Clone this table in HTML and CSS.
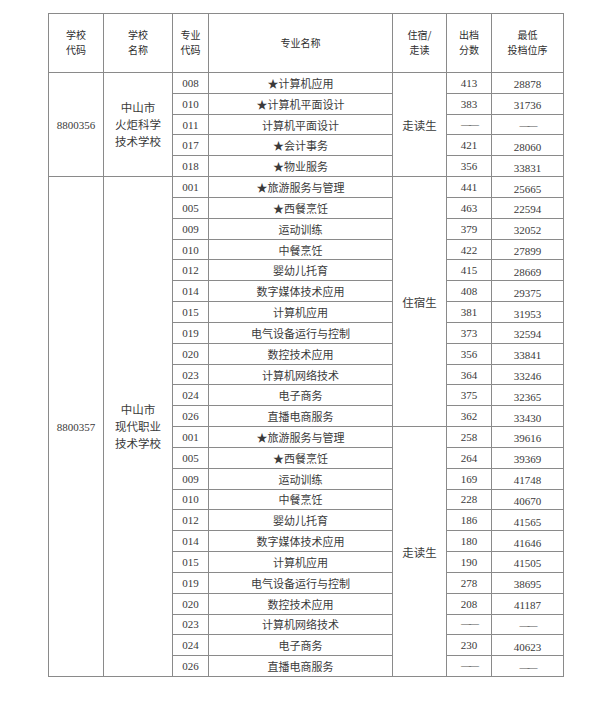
FILE: index.html
```html
<!DOCTYPE html>
<html lang="zh-CN">
<head>
<meta charset="utf-8">
<title>录取分数</title>
<link rel="stylesheet" href="styles.css">
</head>
<body>
<table class="score-table">
<colgroup>
<col class="c-code"><col class="c-name"><col class="c-mcode"><col class="c-major"><col class="c-stay"><col class="c-score"><col class="c-rank">
</colgroup>
<thead>
<tr class="head-row">
<th>学校<br>代码</th><th>学校<br>名称</th><th>专业<br>代码</th><th>专业名称</th><th>住宿/<br>走读</th><th>出档<br>分数</th><th>最低<br>投档位序</th>
</tr>
</thead>
<tbody>
<tr><td rowspan="5" class="num">8800356</td><td rowspan="5" class="school">中山市<br>火炬科学<br>技术学校</td><td class="num">008</td><td>★计算机应用</td><td rowspan="5" class="stay">走读生</td><td class="num">413</td><td class="num rank">28878</td></tr>
<tr><td class="num">010</td><td>★计算机平面设计</td><td class="num">383</td><td class="num rank">31736</td></tr>
<tr><td class="num">011</td><td>计算机平面设计</td><td class="num dash">——</td><td class="num rank dash">——</td></tr>
<tr><td class="num">017</td><td>★会计事务</td><td class="num">421</td><td class="num rank">28060</td></tr>
<tr><td class="num">018</td><td>★物业服务</td><td class="num">356</td><td class="num rank">33831</td></tr>

<tr><td rowspan="24" class="num">8800357</td><td rowspan="24" class="school">中山市<br>现代职业<br>技术学校</td><td class="num">001</td><td>★旅游服务与管理</td><td rowspan="12" class="stay">住宿生</td><td class="num">441</td><td class="num rank">25665</td></tr>
<tr><td class="num">005</td><td>★西餐烹饪</td><td class="num">463</td><td class="num rank">22594</td></tr>
<tr><td class="num">009</td><td>运动训练</td><td class="num">379</td><td class="num rank">32052</td></tr>
<tr><td class="num">010</td><td>中餐烹饪</td><td class="num">422</td><td class="num rank">27899</td></tr>
<tr><td class="num">012</td><td>婴幼儿托育</td><td class="num">415</td><td class="num rank">28669</td></tr>
<tr><td class="num">014</td><td>数字媒体技术应用</td><td class="num">408</td><td class="num rank">29375</td></tr>
<tr><td class="num">015</td><td>计算机应用</td><td class="num">381</td><td class="num rank">31953</td></tr>
<tr><td class="num">019</td><td>电气设备运行与控制</td><td class="num">373</td><td class="num rank">32594</td></tr>
<tr><td class="num">020</td><td>数控技术应用</td><td class="num">356</td><td class="num rank">33841</td></tr>
<tr><td class="num">023</td><td>计算机网络技术</td><td class="num">364</td><td class="num rank">33246</td></tr>
<tr><td class="num">024</td><td>电子商务</td><td class="num">375</td><td class="num rank">32365</td></tr>
<tr><td class="num">026</td><td>直播电商服务</td><td class="num">362</td><td class="num rank">33430</td></tr>

<tr><td class="num">001</td><td>★旅游服务与管理</td><td rowspan="12" class="stay">走读生</td><td class="num">258</td><td class="num rank">39616</td></tr>
<tr><td class="num">005</td><td>★西餐烹饪</td><td class="num">264</td><td class="num rank">39369</td></tr>
<tr><td class="num">009</td><td>运动训练</td><td class="num">169</td><td class="num rank">41748</td></tr>
<tr><td class="num">010</td><td>中餐烹饪</td><td class="num">228</td><td class="num rank">40670</td></tr>
<tr><td class="num">012</td><td>婴幼儿托育</td><td class="num">186</td><td class="num rank">41565</td></tr>
<tr><td class="num">014</td><td>数字媒体技术应用</td><td class="num">180</td><td class="num rank">41646</td></tr>
<tr><td class="num">015</td><td>计算机应用</td><td class="num">190</td><td class="num rank">41505</td></tr>
<tr><td class="num">019</td><td>电气设备运行与控制</td><td class="num">278</td><td class="num rank">38695</td></tr>
<tr><td class="num">020</td><td>数控技术应用</td><td class="num">208</td><td class="num rank">41187</td></tr>
<tr><td class="num">023</td><td>计算机网络技术</td><td class="num dash">——</td><td class="num rank dash">——</td></tr>
<tr><td class="num">024</td><td>电子商务</td><td class="num">230</td><td class="num rank">40623</td></tr>
<tr><td class="num">026</td><td>直播电商服务</td><td class="num dash">——</td><td class="num rank dash">——</td></tr>
</tbody>
</table>
</body>
</html>
```
FILE: styles.css
```css
html, body {
  margin: 0;
  padding: 0;
  background: #ffffff;
}

body {
  padding: 13px 0 0 48px;
  font-family: "Noto Sans CJK SC", "Noto Sans", sans-serif;
  color: #3a3a3a;
}

.score-table {
  border-collapse: collapse;
  table-layout: fixed;
  width: 515px;
  font-size: 11px;
}

.c-code { width: 55px; }
.c-name { width: 69px; }
.c-mcode { width: 36px; }
.c-major { width: 184px; }
.c-stay { width: 54px; }
.c-score { width: 45px; }
.c-rank { width: 72px; }

.score-table th,
.score-table td {
  border: 1px solid #8a8a8a;
  padding: 0;
  text-align: center;
  vertical-align: middle;
  white-space: nowrap;
}

.head-row {
  height: 59px;
}

.score-table th {
  font-weight: normal;
  font-size: 10px;
  line-height: 14.6px;
  color: #2e2e2e;
}

.score-table tbody tr {
  height: 20.83px;
}

.score-table td {
  line-height: 14px;
}

.num {
  font-family: "Liberation Serif", "DejaVu Serif", serif;
  font-size: 11px;
}

.rank {
  padding-top: 3px !important;
}

.dash {
  letter-spacing: -2px;
  font-size: 10px;
  color: #555;
}

.school {
  font-size: 11.5px;
  line-height: 16.8px !important;
}

.stay {
  font-size: 11.5px;
}
```
